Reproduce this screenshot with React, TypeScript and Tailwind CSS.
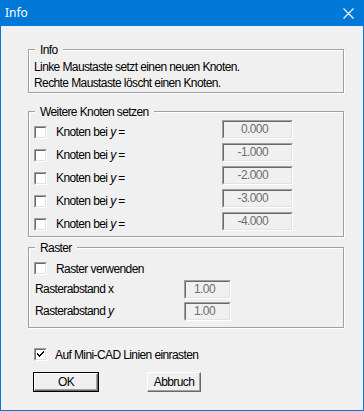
import React from "react";

const FONT = "font-['Liberation_Sans',Arial,sans-serif]";

function Checkbox({ checked = false }: { checked?: boolean }) {
  return (
    <div className="w-[13px] h-[13px] shrink-0 border border-t-[#a0a0a0] border-l-[#a0a0a0] border-b-white border-r-white">
      <div className="w-full h-full border border-t-[#696969] border-l-[#696969] border-b-[#e3e3e3] border-r-[#e3e3e3] bg-white relative">
        {checked && (
          <svg width="9" height="9" viewBox="0 0 9 9" className="absolute left-0 top-0" shapeRendering="crispEdges">
            <path d="M1 3h1v1h1v1h1V4h1V3h1V2h1V1h1v2H7v1H6v1H5v1H4v1H3V6H2V5H1z" fill="#000" />
          </svg>
        )}
      </div>
    </div>
  );
}

function Field({ value, className = "", align = "right" }: { value: string; className?: string; align?: "right" | "left" }) {
  return (
    <div className={`h-[19px] shrink-0 border border-t-[#a0a0a0] border-l-[#a0a0a0] border-b-white border-r-white ${className}`}>
      <div
        className={`w-full h-full border border-t-[#696969] border-l-[#696969] border-b-[#e3e3e3] border-r-[#e3e3e3] bg-[#f0f0f0] text-[#6d6d6d] leading-[15px] ${
          align === "right" ? "text-right pr-[23px]" : "text-left pl-[8px]"
        }`}
      >
        {value}
      </div>
    </div>
  );
}

function Group({ title, className = "", children }: { title: string; className?: string; children: React.ReactNode }) {
  return (
    <div
      className={`relative w-[316px] border border-[#a0a0a0] shadow-[inset_1px_1px_0_#ffffff,1px_1px_0_#ffffff] ${className}`}
    >
      <span className="absolute left-[6px] top-[-8px] px-[5px] bg-[#f0f0f0] leading-[16px]">{title}</span>
      {children}
    </div>
  );
}

export default function App() {
  const rows = ["0.000", "-1.000", "-2.000", "-3.000", "-4.000"];
  return (
    <div className={`w-[364px] h-[411px] bg-[#0078d7] flex flex-col ${FONT} text-[12px] tracking-[-0.6px] text-black`}>
      <div className="h-[26px] shrink-0 flex items-center justify-between pl-[5px] pr-[10px]">
        <span className="font-['Noto_Sans',sans-serif] text-[12px] tracking-normal text-white leading-none">Info</span>
        <svg width="11" height="11" viewBox="0 0 11 11">
          <path d="M0.5 0.5L10.5 10.5M10.5 0.5L0.5 10.5" stroke="#ffffff" strokeWidth="1.1" />
        </svg>
      </div>
      <div className="flex-1 mx-[1px] mb-[1px] bg-[#f0f0f0] flex flex-col pl-[27px] pt-[23px] leading-[16px]">
        <Group title="Info" className="h-[44px] pt-[9px] pl-[5px]">
          <div>Linke Maustaste setzt einen neuen Knoten.</div>
          <div>Rechte Maustaste löscht einen Knoten.</div>
        </Group>

        <Group title="Weitere Knoten setzen" className="mt-[18px] pt-[8px] pb-[5px] flex flex-col gap-[4px]">
          {rows.map((v) => (
            <div key={v} className="flex items-center h-[19px]">
              <div className="flex items-center mt-[5px] pl-[5px] flex-1">
                <Checkbox />
                <span className="ml-[9px]">
                  Knoten bei <i>y</i> =
                </span>
              </div>
              <Field value={v} className="w-[71px] mr-[50px]" />
            </div>
          ))}
        </Group>

        <Group title="Raster" className="mt-[10px] pt-[14px] pb-[6px] pl-[5px] flex flex-col">
          <div className="flex items-center h-[13px]">
            <Checkbox />
            <span className="ml-[9px]">Raster verwenden</span>
          </div>
          <div className="flex items-center h-[19px] mt-[5px]">
            <span className="w-[150px] pl-[1px] -mt-[2px]">Rasterabstand x</span>
            <Field value="1.00" align="left" className="w-[47px]" />
          </div>
          <div className="flex items-center h-[19px] mt-[3px]">
            <span className="w-[150px] pl-[1px] -mt-[2px]">
              Rasterabstand <i>y</i>
            </span>
            <Field value="1.00" align="left" className="w-[47px]" />
          </div>
        </Group>

        <div className="flex items-center h-[13px] mt-[20px] ml-[6px]">
          <Checkbox checked />
          <span className="ml-[8px]">Auf Mini-CAD Linien einrasten</span>
        </div>

        <div className="flex mt-[11px] ml-[5px]">
          <div className="w-[66px] h-[20px] border border-black">
            <div className="w-full h-full border border-t-white border-l-white border-b-[#696969] border-r-[#696969] shadow-[inset_-1px_-1px_0_#a0a0a0] flex items-center justify-center bg-[#f0f0f0]">
              OK
            </div>
          </div>
          <div className="ml-[48px] w-[54px] h-[20px] border border-t-white border-l-white border-b-[#696969] border-r-[#696969]">
            <div className="w-full h-full shadow-[inset_-1px_-1px_0_#a0a0a0] flex items-center justify-center bg-[#f0f0f0]">
              Abbruch
            </div>
          </div>
        </div>
      </div>
    </div>
  );
}
